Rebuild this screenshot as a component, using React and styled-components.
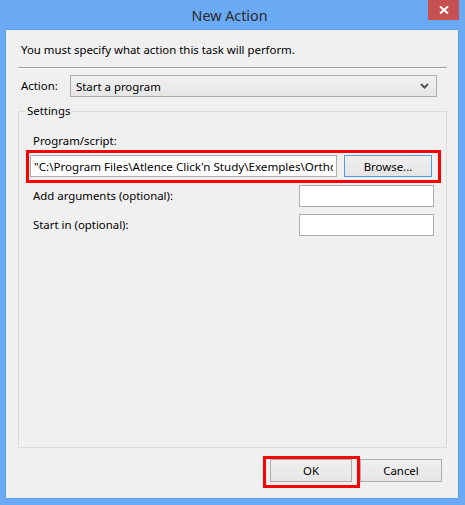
import styled, { createGlobalStyle } from 'styled-components'

const GlobalStyle = createGlobalStyle`
  html, body {
    margin: 0;
    padding: 0;
    background: #6aaaf4;
  }
  body {
    font-family: "Noto Sans", "Liberation Sans", sans-serif;
    font-size: 11.4px;
    color: #000;
  }
`

const PROGRAM_PATH = '"C:\\Program Files\\Atlence Click\'n Study\\Exemples\\Orthographe\\Ortho.exe"'

export default function App() {
  return (
    <>
      <GlobalStyle />
      <Window>
        <TitleBar>
          <span />
          <Title>New Action</Title>
          <CloseButton aria-label="Close">
            <svg width="10" height="8" viewBox="0 0 10 8">
              <path d="M1 0.5 L9 7.5 M9 0.5 L1 7.5" stroke="#fff" strokeWidth="2" fill="none" />
            </svg>
          </CloseButton>
        </TitleBar>

        <Client>
          <Intro>You must specify what action this task will perform.</Intro>
          <Separator />

          <ActionRow>
            <Label>Action:</Label>
            <Select>
              <span>Start a program</span>
              <svg width="9" height="6" viewBox="0 0 9 6">
                <path d="M1 1 L4.5 4.5 L8 1" stroke="#555" strokeWidth="2" fill="none" />
              </svg>
            </Select>
          </ActionRow>

          <Group>
            <Legend>Settings</Legend>
            <GroupBody>
              <Label>Program/script:</Label>
              <Highlight $top={5} $right={7} $bottom={6} $left={7}>
                <ProgramRow>
                  <TextField $wide value={PROGRAM_PATH} readOnly />
                  <Button $focused $width={88}>Browse...</Button>
                </ProgramRow>
              </Highlight>
              <FieldRow $gap={8}>
                <Label>Add arguments (optional):</Label>
                <TextField readOnly value="" />
              </FieldRow>
              <FieldRow $gap={7}>
                <Label>Start in (optional):</Label>
                <TextField readOnly value="" />
              </FieldRow>
            </GroupBody>
          </Group>

          <Buttons>
            <Highlight $top={3} $right={8} $bottom={6} $left={7}>
              <Button $width={82}>OK</Button>
            </Highlight>
            <Button $width={82}>Cancel</Button>
          </Buttons>
        </Client>
      </Window>
    </>
  )
}

const Window = styled.div`
  width: 465px;
  height: 505px;
  display: flex;
  flex-direction: column;
  box-sizing: border-box;
  padding: 0 6px 6px 5px;
`

const TitleBar = styled.div`
  height: 29px;
  display: grid;
  grid-template-columns: 1fr auto 1fr;
  margin-right: -6px;
  margin-left: -5px;
  padding-right: 6px;
`

const Title = styled.div`
  font-size: 14.3px;
  line-height: 29px;
  color: #2a2a2a;
  padding-top: 1px;
`

const CloseButton = styled.div`
  justify-self: end;
  width: 31px;
  height: 20px;
  background: #c75050;
  display: flex;
  align-items: center;
  justify-content: center;
`

const Client = styled.div`
  flex: 1;
  background: #f0f0f0;
  border: 1px solid #5d9ae0;
  display: flex;
  flex-direction: column;
  padding: 12px 11px 16px 12px;
`

const Intro = styled.div`
  line-height: 16px;
  padding-left: 3px;
`

const Separator = styled.div`
  margin-top: 9px;
  height: 1px;
  background: #a0a0a0;
  border-bottom: 1px solid #fff;
`

const ActionRow = styled.div`
  margin-top: 6px;
  display: flex;
  align-items: center;
  padding-left: 3px;
  margin-right: 10px;
`

const Label = styled.div`
  line-height: 16px;
  white-space: nowrap;
`

const Select = styled.div`
  margin-left: auto;
  width: 367px;
  height: 22px;
  box-sizing: border-box;
  border: 1px solid #acacac;
  background: linear-gradient(#f2f2f2, #e5e5e5);
  display: flex;
  align-items: center;
  justify-content: space-between;
  padding: 0 7px 0 5px;
`

const Group = styled.fieldset`
  flex: 1;
  margin: 6px 0 0;
  padding: 0 12px 0 14px;
  border: 1px solid #dcdcdc;
  min-width: 0;
`

const Legend = styled.legend`
  margin-left: -8px;
  padding: 0 2px;
  line-height: 16px;
`

const GroupBody = styled.div`
  padding-top: 14px;
  display: flex;
  flex-direction: column;
`

const Highlight = styled.div`
  position: relative;
  margin-top: 6px;

  &::after {
    content: "";
    position: absolute;
    top: -${p => p.$top}px;
    right: -${p => p.$right}px;
    bottom: -${p => p.$bottom}px;
    left: -${p => p.$left}px;
    border: 3px solid #f00;
    pointer-events: none;
  }
`

const ProgramRow = styled.div`
  display: flex;
  gap: 7px;
  margin-left: -3px;
  margin-right: 1px;
`

const TextField = styled.input`
  width: ${p => (p.$wide ? '307px' : '135px')};
  height: 22px;
  box-sizing: border-box;
  border: 1px solid #abadb3;
  background: #fff;
  font: inherit;
  font-size: 11.6px;
  padding: 0 3px;
  color: #000;
  outline: none;
`

const Button = styled.div`
  width: ${p => p.$width}px;
  height: ${p => (p.$focused ? 22 : 23)}px;
  box-sizing: border-box;
  border: 1px solid ${p => (p.$focused ? '#4d9de6' : '#acacac')};
  background: linear-gradient(#f0f0f0, #e5e5e5);
  display: flex;
  align-items: center;
  justify-content: center;
  flex-shrink: 0;
`

const FieldRow = styled.div`
  margin-top: ${p => p.$gap}px;
  display: flex;
  align-items: center;
  justify-content: space-between;
`

const Buttons = styled.div`
  margin-top: 11px;
  display: flex;
  justify-content: flex-end;
  gap: 8px;
  padding-right: 5px;

  & > ${Highlight} {
    margin-top: 0;
  }
`
